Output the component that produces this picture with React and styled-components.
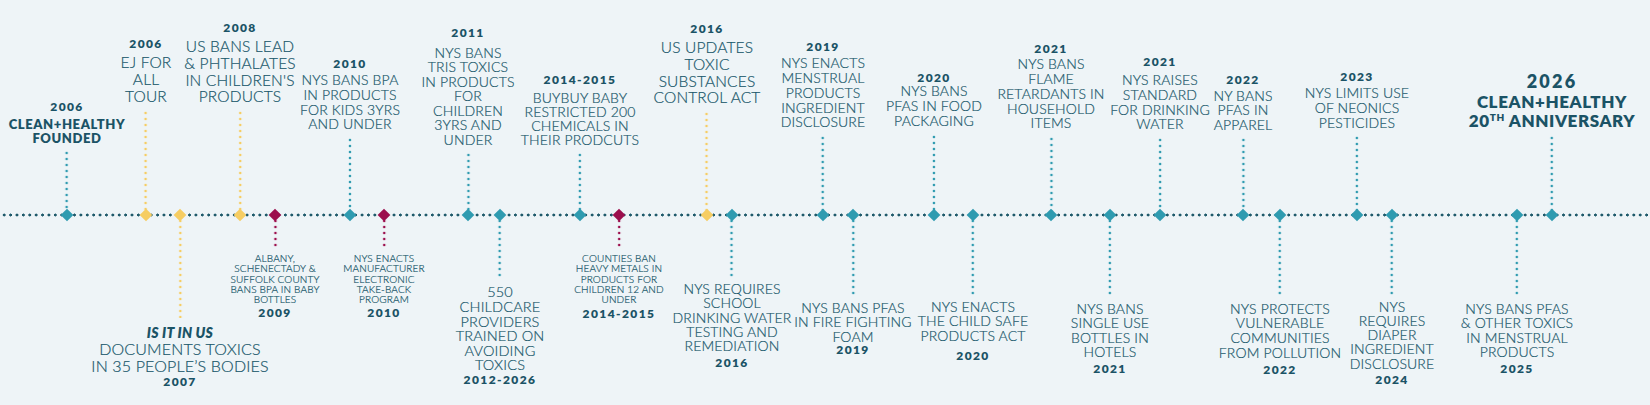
import React from "react";
import styled, { createGlobalStyle } from "styled-components";

const LINE_Y = 215;
const H = 405;
const TEAL = "#2f9bb0";
const YELLOW = "#f6cd63";
const CRIMSON = "#9c0f4d";
const AXIS = "#1f5a6b";

const GlobalStyle = createGlobalStyle`
  html, body { margin: 0; padding: 0; background: #eef4f7; }
  body { font-family: "Lato", "Noto Sans", sans-serif; }
`;

const Canvas = styled.div`
  position: relative;
  width: 1650px;
  height: ${H}px;
  overflow: hidden;
  background: #eef4f7;
`;

const Axis = styled.div`
  position: absolute;
  left: 0;
  right: 0;
  top: ${LINE_Y - 2}px;
  height: 4px;
  background-image: radial-gradient(circle, ${AXIS} 1.3px, transparent 1.75px);
  background-size: 6.4px 4px;
  background-position: 1px 0;
`;

const Marker = styled.div`
  position: absolute;
  top: ${LINE_Y}px;
  width: 9px;
  height: 9px;
  background: ${(p) => p.$color};
  transform: translate(-50%, -50%) rotate(45deg);
  z-index: 2;
`;

const EventAbove = styled.div`
  position: absolute;
  bottom: ${H - LINE_Y}px;
  transform: translateX(-50%);
  display: flex;
  flex-direction: column;
  align-items: center;
  text-align: center;
  white-space: nowrap;
`;

const EventBelow = styled.div`
  position: absolute;
  top: ${LINE_Y}px;
  transform: translateX(-50%);
  display: flex;
  flex-direction: column;
  align-items: center;
  text-align: center;
  white-space: nowrap;
`;

const Year = styled.div`
  font-family: "Lato", sans-serif;
  font-weight: 800;
  font-size: ${(p) => p.$size || 12}px;
  line-height: ${(p) => p.$size || 12}px;
  letter-spacing: ${(p) => (p.$size > 14 ? 2.2 : 1.4)}px;
  color: #1b5366;
  margin-top: ${(p) => p.$mt || 0}px;
`;

const Desc = styled.div`
  font-family: "Lato", sans-serif;
  font-weight: ${(p) => (p.$strong ? 800 : 300)};
  font-size: ${(p) => p.$fs}px;
  line-height: ${(p) => p.$lh}px;
  letter-spacing: ${(p) => (p.$strong ? 0.6 : 0.15)}px;
  color: ${(p) => (p.$strong ? "#1b5366" : "#1a586b")};
  margin-top: ${(p) => p.$mt || 0}px;
  -webkit-text-stroke: ${(p) => (p.$strong ? 0 : 0.2)}px currentColor;

  sup {
    font-size: 10px;
    line-height: 0;
    vertical-align: 6px;
  }
`;

const Lead = styled.div`
  font-weight: 800;
  font-style: italic;
  font-size: 14px;
  letter-spacing: 0.3px;
  color: #1b5366;
  -webkit-text-stroke: 0;
`;

const Connector = styled.div`
  width: 4px;
  height: ${(p) => p.$h}px;
  margin-top: ${(p) => p.$mt || 0}px;
  background-image: radial-gradient(circle, ${(p) => p.$color} 1.15px, transparent 1.65px);
  background-size: 4px 6px;
  background-position: 0 ${(p) => (p.$down ? 3 : 0)}px;
`;

const above = [
  { x: 67, c: TEAL, year: "2006", strong: true, lines: ["CLEAN+HEALTHY", "FOUNDED"], fs: 13, lh: 13.3, m1: 5, cTop: 150 },
  { x: 146, c: YELLOW, year: "2006", lines: ["EJ FOR", "ALL", "TOUR"], fs: 15.5, lh: 17, m1: 4.5, cTop: 110 },
  { x: 240, c: YELLOW, year: "2008", lines: ["US BANS LEAD", "& PHTHALATES", "IN CHILDREN'S", "PRODUCTS"], fs: 15.5, lh: 16.7, m1: 4.6, cTop: 110 },
  { x: 350, c: TEAL, year: "2010", lines: ["NYS BANS BPA", "IN PRODUCTS", "FOR KIDS 3YRS", "AND UNDER"], fs: 14, lh: 14.7, m1: 3.7, cTop: 137 },
  { x: 468, c: TEAL, year: "2011", lines: ["NYS BANS", "TRIS TOXICS", "IN PRODUCTS", "FOR", "CHILDREN", "3YRS AND", "UNDER"], fs: 14, lh: 14.45, m1: 6.8, cTop: 152 },
  { x: 580, c: TEAL, year: "2014-2015", lines: ["BUYBUY BABY", "RESTRICTED 200", "CHEMICALS IN", "THEIR PRODCUTS"], fs: 14, lh: 14.1, m1: 4.7, cTop: 152 },
  { x: 707, c: YELLOW, year: "2016", lines: ["US UPDATES", "TOXIC", "SUBSTANCES", "CONTROL ACT"], fs: 15.5, lh: 16.7, m1: 4.6, cTop: 111 },
  { x: 823, c: TEAL, year: "2019", lines: ["NYS ENACTS", "MENSTRUAL", "PRODUCTS", "INGREDIENT", "DISCLOSURE"], fs: 14, lh: 14.75, m1: 3.2, cTop: 135 },
  { x: 934, c: TEAL, year: "2020", lines: ["NYS BANS", "PFAS IN FOOD", "PACKAGING"], fs: 14, lh: 14.85, m1: 0.5, cTop: 134 },
  { x: 1051, c: TEAL, year: "2021", lines: ["NYS BANS", "FLAME", "RETARDANTS IN", "HOUSEHOLD", "ITEMS"], fs: 14, lh: 14.75, m1: 2.6, cTop: 136 },
  { x: 1160, c: TEAL, year: "2021", lines: ["NYS RAISES", "STANDARD", "FOR DRINKING", "WATER"], fs: 14, lh: 14.67, m1: 5, cTop: 137 },
  { x: 1243, c: TEAL, year: "2022", lines: ["NY BANS", "PFAS IN", "APPAREL"], fs: 14, lh: 14.3, m1: 3.5, cTop: 137 },
  { x: 1357, c: TEAL, year: "2023", lines: ["NYS LIMITS USE", "OF NEONICS", "PESTICIDES"], fs: 14, lh: 15, m1: 2.1, cTop: 135 },
  {
    x: 1552, c: TEAL, year: "2026", yearSize: 18, strong: true,
    lines: ["CLEAN+HEALTHY", <>20<sup>TH</sup> ANNIVERSARY</>], fs: 17, lh: 18.3, m1: 3.8, cTop: 135,
  },
];

const below = [
  { x: 180, c: YELLOW, lead: "IS IT IN US", lines: ["DOCUMENTS TOXICS", "IN 35 PEOPLE\u2019S BODIES"], year: "2007", fs: 16, lh: 16.8, m1: 6.6, m2: 0.6, cBot: 318 },
  { x: 275, c: CRIMSON, lines: ["ALBANY,", "SCHENECTADY &", "SUFFOLK COUNTY", "BANS BPA IN BABY", "BOTTLES"], year: "2009", fs: 10, lh: 10.4, m1: 5.8, m2: 2.2, cBot: 247 },
  { x: 384, c: CRIMSON, lines: ["NYS ENACTS", "MANUFACTURER", "ELECTRONIC", "TAKE-BACK", "PROGRAM"], year: "2010", fs: 10, lh: 10.4, m1: 5.8, m2: 2.2, cBot: 247 },
  { x: 500, c: TEAL, lines: ["550", "CHILDCARE", "PROVIDERS", "TRAINED ON", "AVOIDING", "TOXICS"], year: "2012-2026", fs: 14.5, lh: 14.6, m1: 6.4, m2: 1, cBot: 279 },
  { x: 619, c: CRIMSON, lines: ["COUNTIES BAN", "HEAVY METALS IN", "PRODUCTS FOR", "CHILDREN 12 AND", "UNDER"], year: "2014-2015", fs: 10, lh: 10.25, m1: 6.2, m2: 3.6, cBot: 247 },
  { x: 732, c: TEAL, lines: ["NYS REQUIRES", "SCHOOL", "DRINKING WATER", "TESTING AND", "REMEDIATION"], year: "2016", fs: 14, lh: 14.35, m1: 5.1, m2: 3.4, cBot: 277 },
  { x: 853, c: TEAL, lines: ["NYS BANS PFAS", "IN FIRE FIGHTING", "FOAM"], year: "2019", fs: 14, lh: 14.2, m1: 5.2, m2: 0.2, cBot: 296 },
  { x: 973, c: TEAL, lines: ["NYS ENACTS", "THE CHILD SAFE", "PRODUCTS ACT"], year: "2020", fs: 14, lh: 14.35, m1: 4.1, m2: 6.5, cBot: 296 },
  { x: 1110, c: TEAL, lines: ["NYS BANS", "SINGLE USE", "BOTTLES IN", "HOTELS"], year: "2021", fs: 14, lh: 14.4, m1: 5.8, m2: 3.5, cBot: 296 },
  { x: 1280, c: TEAL, lines: ["NYS PROTECTS", "VULNERABLE", "COMMUNITIES", "FROM POLLUTION"], year: "2022", fs: 14, lh: 14.8, m1: 5.6, m2: 3.3, cBot: 296 },
  { x: 1392, c: TEAL, lines: ["NYS", "REQUIRES", "DIAPER", "INGREDIENT", "DISCLOSURE"], year: "2024", fs: 14, lh: 14.3, m1: 4.6, m2: 2.9, cBot: 295 },
  { x: 1517, c: TEAL, lines: ["NYS BANS PFAS", "& OTHER TOXICS", "IN MENSTRUAL", "PRODUCTS"], year: "2025", fs: 14, lh: 14.4, m1: 5.8, m2: 3.5, cBot: 296 },
];

function Lines({ lines }) {
  return lines.map((l, i) => <div key={i}>{l}</div>);
}

export default function App() {
  return (
    <>
      <GlobalStyle />
      <Canvas>
        <Axis />
        {above.map((e, i) => (
          <EventAbove key={"a" + i} style={{ left: e.x }}>
            <Year $size={e.yearSize}>{e.year}</Year>
            <Desc $fs={e.fs} $lh={e.lh} $mt={e.m1} $strong={e.strong}>
              <Lines lines={e.lines} />
            </Desc>
            <Connector $color={e.c} $h={LINE_Y - e.cTop} $mt={5} />
          </EventAbove>
        ))}
        {below.map((e, i) => (
          <EventBelow key={"b" + i} style={{ left: e.x }}>
            <Connector $color={e.c} $h={e.cBot - LINE_Y} $down />
            <Desc $fs={e.fs} $lh={e.lh} $mt={e.m1}>
              {e.lead && <Lead>{e.lead}</Lead>}
              <Lines lines={e.lines} />
            </Desc>
            <Year $mt={e.m2}>{e.year}</Year>
          </EventBelow>
        ))}
        {[...above, ...below].map((e, i) => (
          <Marker key={"m" + i} $color={e.c} style={{ left: e.x }} />
        ))}
      </Canvas>
    </>
  );
}
